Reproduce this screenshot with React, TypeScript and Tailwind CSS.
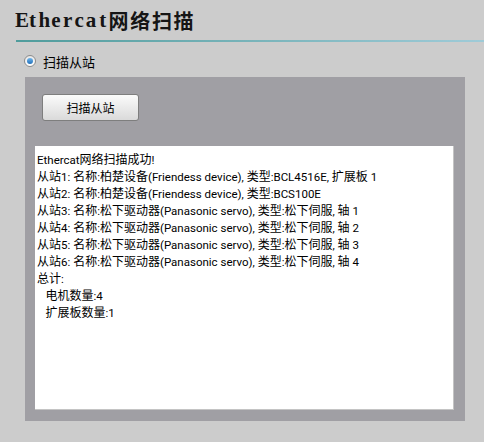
const lines = [
  "Ethercat网络扫描成功!",
  "从站1: 名称:柏楚设备(Friendess device), 类型:BCL4516E, 扩展板 1",
  "从站2: 名称:柏楚设备(Friendess device), 类型:BCS100E",
  "从站3: 名称:松下驱动器(Panasonic servo), 类型:松下伺服, 轴 1",
  "从站4: 名称:松下驱动器(Panasonic servo), 类型:松下伺服, 轴 2",
  "从站5: 名称:松下驱动器(Panasonic servo), 类型:松下伺服, 轴 3",
  "从站6: 名称:松下驱动器(Panasonic servo), 类型:松下伺服, 轴 4",
  "总计:",
  "   电机数量:4",
  "   扩展板数量:1",
];

const cjk = /([\u3400-\u9fff]+)/;

// latin runs are narrower than the chinese ones in the original (Tahoma-ish)
function MixedLine({ text }: { text: string }) {
  return (
    <div className="h-[17px] whitespace-pre leading-[17px]">
      {text.split(cjk).map((part, i) =>
        cjk.test(part) ? (
          <span key={i} className="font-['Noto_Sans_CJK_SC',sans-serif] text-[12px]">
            {part}
          </span>
        ) : (
          <span key={i} className="font-['Roboto','Liberation_Sans',sans-serif] text-[11.5px]">
            {part}
          </span>
        )
      )}
    </div>
  );
}

function RadioDot() {
  return (
    <span className="flex h-[12px] w-[12px] items-center justify-center rounded-full border border-[#8c8c8c] bg-gradient-to-b from-[#e8e8e8] to-white">
      <span className="h-[6px] w-[6px] rounded-full bg-gradient-to-b from-[#6fb6ec] to-[#1f6fb8]" />
    </span>
  );
}

export default function App() {
  return (
    <div className="h-[442px] w-[484px] overflow-hidden bg-[#cccccc] font-['Noto_Sans_CJK_SC',sans-serif] text-black">
      <div className="flex h-[40px] items-center pl-[15px] pt-[1px]">
        <h1 className="flex items-center text-[20px] font-bold leading-none text-[#151515]">
          <span className="font-['Liberation_Serif',serif] text-[21px]">
            {"Ethercat".split("").map((c, i) => (
              <span key={i} className="inline-block w-[11.7px] text-center">
                {c}
              </span>
            ))}
          </span>
          <span className="font-['Noto_Sans_CJK_SC',sans-serif] tracking-[1.7px]">网络扫描</span>
        </h1>
      </div>
      <div className="ml-[16px] h-[1.5px] bg-gradient-to-r from-[#4f9c9c] to-[#9fcbd8]" />

      <div className="flex h-[35px] items-center gap-[7px] pl-[24px] pt-[4px]">
        <RadioDot />
        <span className="text-[13px] leading-none">扫描从站</span>
      </div>

      <div className="ml-[25px] w-[440px] bg-[#a09fa4] px-[10px] pb-[11px] pt-[17px]">
        <button className="ml-[7px] h-[27px] w-[97px] rounded-[3px] border border-[#7e7e7e] bg-gradient-to-b from-[#fbfbfb] to-[#dadada] text-[12px] leading-none">
          扫描从站
        </button>
        <div className="mt-[25px] h-[264px] w-[419px] border-b border-r border-[#c4c4c4] bg-white pl-[2px] pt-[3px]">
          {lines.map((l, i) => (
            <MixedLine key={i} text={l} />
          ))}
        </div>
      </div>
    </div>
  );
}
